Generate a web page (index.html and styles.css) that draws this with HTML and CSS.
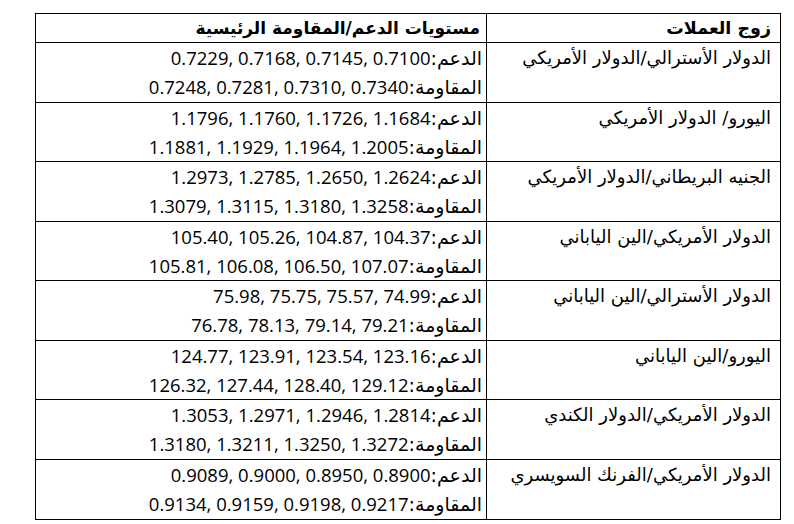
FILE: index.html
```html
<!DOCTYPE html>
<html lang="ar" dir="rtl">
<head>
<meta charset="utf-8">
<link rel="stylesheet" href="styles.css">
</head>
<body>
<div class="levels">
  <div class="cell head pair">زوج العملات</div>
  <div class="cell head vals">مستويات الدعم/المقاومة الرئيسية</div>

  <div class="cell pair">الدولار الأسترالي/الدولار الأمريكي</div>
  <div class="cell vals"><div class="line"><span class="lbl">الدعم:</span><span class="nums" dir="ltr">0.7229, 0.7168, 0.7145, 0.7100</span></div><div class="line"><span class="lbl">المقاومة:</span><span class="nums" dir="ltr">0.7248, 0.7281, 0.7310, 0.7340</span></div></div>

  <div class="cell pair">اليورو/ الدولار الأمريكي</div>
  <div class="cell vals"><div class="line"><span class="lbl">الدعم:</span><span class="nums" dir="ltr">1.1796, 1.1760, 1.1726, 1.1684</span></div><div class="line"><span class="lbl">المقاومة:</span><span class="nums" dir="ltr">1.1881, 1.1929, 1.1964, 1.2005</span></div></div>

  <div class="cell pair">الجنيه البريطاني/الدولار الأمريكي</div>
  <div class="cell vals"><div class="line"><span class="lbl">الدعم:</span><span class="nums" dir="ltr">1.2973, 1.2785, 1.2650, 1.2624</span></div><div class="line"><span class="lbl">المقاومة:</span><span class="nums" dir="ltr">1.3079, 1.3115, 1.3180, 1.3258</span></div></div>

  <div class="cell pair">الدولار الأمريكي/الين الياباني</div>
  <div class="cell vals"><div class="line"><span class="lbl">الدعم:</span><span class="nums" dir="ltr">105.40, 105.26, 104.87, 104.37</span></div><div class="line"><span class="lbl">المقاومة:</span><span class="nums" dir="ltr">105.81, 106.08, 106.50, 107.07</span></div></div>

  <div class="cell pair">الدولار الأسترالي/الين الياباني</div>
  <div class="cell vals"><div class="line"><span class="lbl">الدعم:</span><span class="nums" dir="ltr">75.98, 75.75, 75.57, 74.99</span></div><div class="line"><span class="lbl">المقاومة:</span><span class="nums" dir="ltr">76.78, 78.13, 79.14, 79.21</span></div></div>

  <div class="cell pair">اليورو/الين الياباني</div>
  <div class="cell vals"><div class="line"><span class="lbl">الدعم:</span><span class="nums" dir="ltr">124.77, 123.91, 123.54, 123.16</span></div><div class="line"><span class="lbl">المقاومة:</span><span class="nums" dir="ltr">126.32, 127.44, 128.40, 129.12</span></div></div>

  <div class="cell pair">الدولار الأمريكي/الدولار الكندي</div>
  <div class="cell vals"><div class="line"><span class="lbl">الدعم:</span><span class="nums" dir="ltr">1.3053, 1.2971, 1.2946, 1.2814</span></div><div class="line"><span class="lbl">المقاومة:</span><span class="nums" dir="ltr">1.3180, 1.3211, 1.3250, 1.3272</span></div></div>

  <div class="cell pair last">الدولار الأمريكي/الفرنك السويسري</div>
  <div class="cell vals last"><div class="line"><span class="lbl">الدعم:</span><span class="nums" dir="ltr">0.9089, 0.9000, 0.8950, 0.8900</span></div><div class="line"><span class="lbl">المقاومة:</span><span class="nums" dir="ltr">0.9134, 0.9159, 0.9198, 0.9217</span></div></div>
</div>
</body>
</html>
```
FILE: styles.css
```css
html, body {
  margin: 0;
  padding: 0;
  background: #ffffff;
}
body {
  padding: 13px 13px 0 35px;
  font-family: "DejaVu Sans", "Noto Sans", sans-serif;
  color: #000000;
}
.levels {
  display: grid;
  grid-template-columns: 294px 451px;
  grid-template-rows: 29px repeat(8, 59.5px);
  width: 746px;
  box-sizing: border-box;
  border: 1px solid #000000;
}
.cell {
  box-sizing: border-box;
  border-bottom: 1px solid #000000;
  text-align: right;
  overflow: hidden;
  white-space: nowrap;
}
.cell.last {
  border-bottom: none;
}
.pair {
  border-left: 1px solid #000000;
  padding-right: 9px;
  font-size: 18px;
  line-height: 29px;
}
.vals {
  padding-right: 4px;
}
.head {
  font-weight: bold;
  font-size: 17.5px;
  line-height: 28px;
}
.head.vals {
  padding-right: 6px;
  font-size: 17px;
}
.line {
  height: 29px;
  line-height: 29px;
}
.lbl {
  font-size: 19px;
}
.nums {
  font-family: "Open Sans", "Liberation Sans", sans-serif;
  font-size: 18.5px;
  letter-spacing: 0.75px;
}
```
